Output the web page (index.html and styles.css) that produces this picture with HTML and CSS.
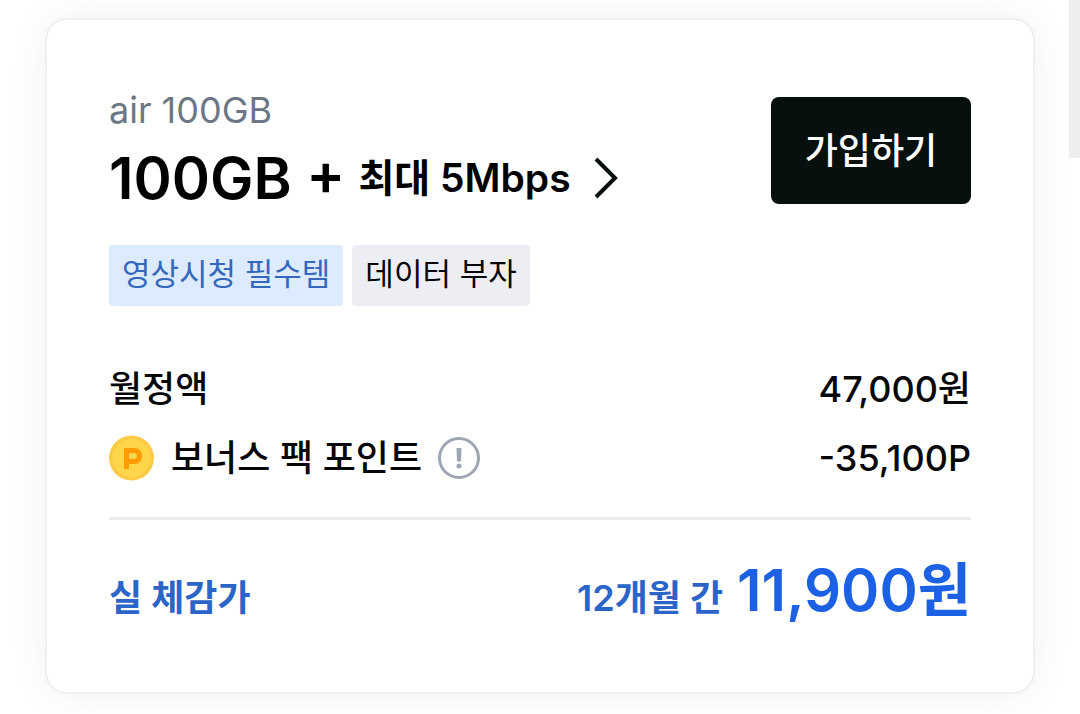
FILE: index.html
```html
<!DOCTYPE html>
<html lang="ko">
<head>
<meta charset="utf-8">
<title>air 100GB</title>
<link rel="stylesheet" href="styles.css">
</head>
<body>
<div class="previous"></div>
<main class="card">
  <header class="head">
    <div class="plan">
      <p class="name">air 100GB</p>
      <a class="title" href="#plan"><strong class="amount">100GB +</strong><span class="speed">최대 5Mbps</span><svg class="arrow" viewBox="0 0 26 42" aria-hidden="true"><path d="M3 2L22 21L3 40"/></svg></a>
    </div>
    <button class="join" type="button">가입하기</button>
  </header>
  <ul class="tags">
    <li class="tag tag-blue">영상시청 필수템</li>
    <li class="tag">데이터 부자</li>
  </ul>
  <dl class="prices">
    <div class="row"><dt>월정액</dt><dd>47,000원</dd></div>
    <div class="row">
      <dt class="bonus"><svg class="coin" viewBox="0 0 46 46" aria-hidden="true"><circle cx="22.5" cy="23" r="22.5" fill="#ffcb46"/><circle cx="22.5" cy="23" r="19" fill="#ffd54a"/><path d="M17.500 34V15.500H25Q30.500 15.500 30.500 21T25 26.500H17.500" fill="none" stroke="#ff9d00" stroke-width="5"/></svg><span>보너스 팩 포인트</span><button class="info" type="button" aria-label="안내"><svg viewBox="0 0 44 44" aria-hidden="true"><circle cx="22" cy="22" r="19.5" fill="none" stroke="#9ea6b3" stroke-width="3"/><path d="M19.500 12H24.500L24 25.500H20Z" fill="#9ea6b3"/><circle cx="22" cy="30" r="2.500" fill="#9ea6b3"/></svg></button></dt>
      <dd>-35,100P</dd>
    </div>
  </dl>
  <footer class="total"><span class="label">실 체감가</span><p class="sum"><span class="period">12개월 간</span><strong class="price">11,900원</strong></p></footer>
</main>
<div class="scrollbar"></div>
</body>
</html>
```
FILE: styles.css
```css
* { box-sizing: border-box; }
body { margin: 0; padding: 0 45px 20px; background: #fff; color: #050708; font-family: Inter, "Noto Sans CJK KR", sans-serif; }
p, ul, dl, dd { margin: 0; padding: 0; }
button { border: 0; padding: 0; font: inherit; }
.previous { height: 18px; }
.card { padding: 68px 62px 54px; border: 2px solid #eeeff0; border-radius: 22px; background: #fff; box-shadow: 0 0 40px rgba(0,0,0,.06); }
.head { display: flex; justify-content: space-between; align-items: flex-start; }
.name { font-size: 36px; line-height: 44px; color: #6b7785; }
.title { display: flex; align-items: center; height: 80px; margin-top: 6px; color: #000; text-decoration: none; }
.amount { font-size: 58px; font-weight: 600; }
.speed { margin-left: 13px; padding-bottom: 6px; font-size: 39px; font-weight: 600; }
.arrow { width: 26px; height: 42px; margin-left: 22px; fill: none; stroke: #07100f; stroke-width: 4; }
.join { width: 200px; height: 107px; margin-top: 9px; padding-bottom: 6px; border-radius: 8px; background: #07100f; color: #fff; font-size: 36px; font-weight: 500; }
.tags { display: flex; gap: 9px; margin-top: 27px; list-style: none; }
.tag { padding: 0 13px 3px; border-radius: 4px; background: #edeef3; font-size: 31px; line-height: 58px; }
.tag-blue { background: #dcebfe; color: #3568bd; }
.prices { display: grid; gap: 9px; margin-top: 53px; padding-bottom: 29px; border-bottom: 3px solid #ebeced; font-size: 36px; font-weight: 500; line-height: 60px; }
.row { display: flex; justify-content: space-between; align-items: center; }
.bonus { display: flex; align-items: center; }
.coin { width: 46px; height: 46px; margin-right: 16px; }
.info { display: flex; width: 44px; height: 44px; margin-left: 15px; background: none; }
.total { display: flex; justify-content: space-between; align-items: baseline; margin-top: 30px; color: #2c65c8; font-weight: 600; font-size: 36px; }
.sum { display: flex; align-items: baseline; gap: 14px; line-height: 80px; }
.price { color: #1c60e4; font-size: 58px; font-weight: 600; }
.scrollbar { position: absolute; top: 0; right: 0; width: 11px; height: 158px; background: #eee; }
```
